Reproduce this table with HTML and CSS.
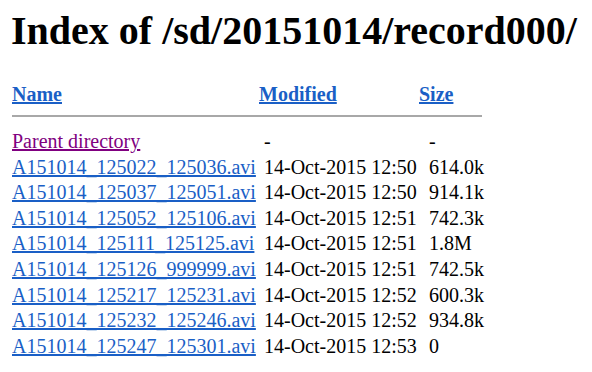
FILE: index.html
```html
<!DOCTYPE html>
<html>
<head>
<meta charset="utf-8">
<title>Index of /sd/20151014/record000/</title>
<link rel="stylesheet" href="styles.css">
</head>
<body>
<h1 class="title">Index of /sd/20151014/record000/</h1>
<table class="listing">
<thead>
<tr class="head"><th class="c-name"><a href="#">Name</a></th><th class="c-mod"><a href="#">Modified</a></th><th class="c-size"><a href="#">Size</a></th></tr>
<tr class="rule"><td colspan="3"><div class="line"></div></td></tr>
</thead>
<tbody>
<tr><td class="c-name"><a class="parent" href="#">Parent directory</a></td><td class="d-mod">-</td><td class="d-size">-</td></tr>
<tr><td class="c-name"><a href="#">A151014_125022_125036.avi</a></td><td class="d-mod">14-Oct-2015 12:50</td><td class="d-size">614.0k</td></tr>
<tr><td class="c-name"><a href="#">A151014_125037_125051.avi</a></td><td class="d-mod">14-Oct-2015 12:50</td><td class="d-size">914.1k</td></tr>
<tr><td class="c-name"><a href="#">A151014_125052_125106.avi</a></td><td class="d-mod">14-Oct-2015 12:51</td><td class="d-size">742.3k</td></tr>
<tr><td class="c-name"><a href="#">A151014_125111_125125.avi</a></td><td class="d-mod">14-Oct-2015 12:51</td><td class="d-size">1.8M</td></tr>
<tr><td class="c-name"><a href="#">A151014_125126_999999.avi</a></td><td class="d-mod">14-Oct-2015 12:51</td><td class="d-size">742.5k</td></tr>
<tr><td class="c-name"><a href="#">A151014_125217_125231.avi</a></td><td class="d-mod">14-Oct-2015 12:52</td><td class="d-size">600.3k</td></tr>
<tr><td class="c-name"><a href="#">A151014_125232_125246.avi</a></td><td class="d-mod">14-Oct-2015 12:52</td><td class="d-size">934.8k</td></tr>
<tr><td class="c-name"><a href="#">A151014_125247_125301.avi</a></td><td class="d-mod">14-Oct-2015 12:53</td><td class="d-size">0</td></tr>
</tbody>
</table>
</body>
</html>
```
FILE: styles.css
```css
html, body {
  margin: 0;
  padding: 0;
  background: #ffffff;
}
body {
  padding: 0 0 0 12px;
  font-family: "Liberation Serif", "Times New Roman", serif;
  font-size: 20px;
  color: #000;
}
.title {
  font-size: 40px;
  font-weight: bold;
  line-height: 46px;
  margin: 8px 0 28px -1px;
}
.listing {
  border-collapse: collapse;
  border-spacing: 0;
  table-layout: fixed;
  width: 470px;
}
.listing th,
.listing td {
  padding: 0;
  text-align: left;
  white-space: nowrap;
  line-height: 25.6px;
}
.listing th {
  font-weight: bold;
}
.c-name { width: 247px; }
.c-mod { width: 160px; }
.d-mod { padding-left: 5px !important; }
.d-size { padding-left: 10px !important; }
.listing a {
  color: #1a5fc6;
  text-decoration: underline;
}
.listing a.parent {
  color: #800080;
}
.rule td {
  line-height: 0;
  padding: 7px 0 12.5px;
}
.line {
  height: 2px;
  background: #a8a8a8;
}
```
